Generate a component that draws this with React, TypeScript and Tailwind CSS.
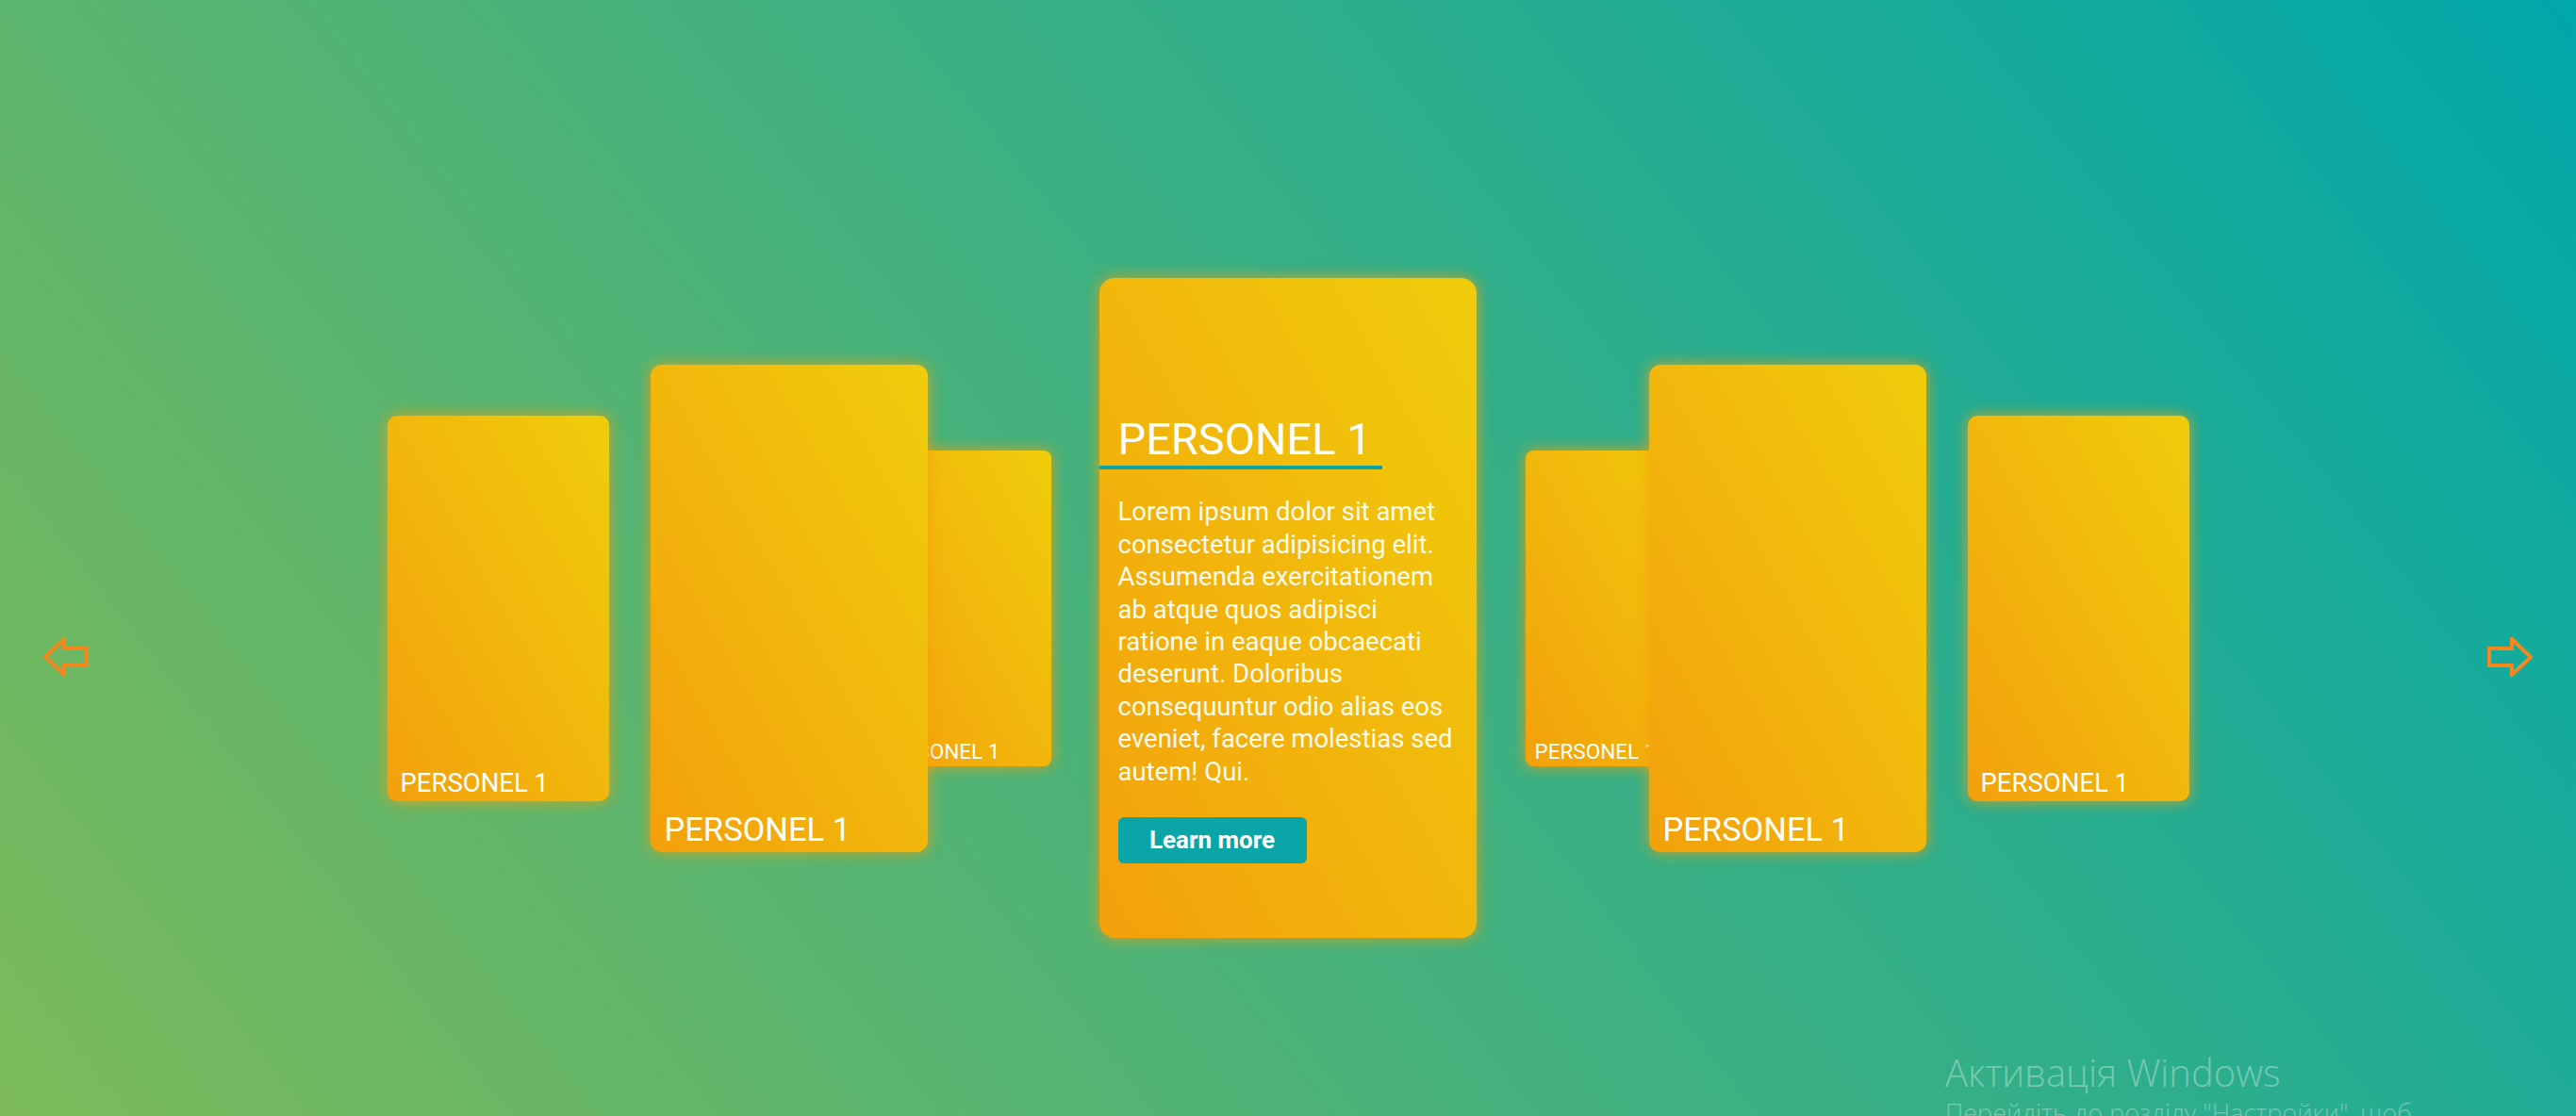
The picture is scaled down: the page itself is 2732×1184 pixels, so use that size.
import React from "react";

type Size = "sm" | "md" | "lg";

const sizes: Record<Size, { box: string; label: string }> = {
  sm: { box: "w-[193px] h-[335px] rounded-[8px]", label: "text-[22.5px] px-[10px] pb-[4px]" },
  md: { box: "w-[235px] h-[409px] rounded-[10px]", label: "text-[27.5px] px-[14px] pb-[5px]" },
  lg: { box: "w-[294px] h-[517px] rounded-[12px]", label: "text-[34.5px] px-[15px] pb-[6px]" },
};

const cardBg =
  "bg-linear-to-bl from-[#efcd0b] to-[#f3a00c] shadow-[0_0_16px_rgba(244,160,12,0.85)]";

function SideCard({ size, className = "" }: { size: Size; className?: string }) {
  const s = sizes[size];
  return (
    <div className={`flex shrink-0 flex-col justify-end ${cardBg} ${s.box} ${className}`}>
      <h3 className={`whitespace-nowrap font-normal leading-none text-white ${s.label}`}>PERSONEL 1</h3>
    </div>
  );
}

function Arrow({ dir }: { dir: "left" | "right" }) {
  const points =
    dir === "left"
      ? "2,21 22,2 22,12 46,12 46,30 22,30 22,40"
      : "46,21 26,2 26,12 2,12 2,30 26,30 26,40";
  return (
    <button className="mt-[104px] h-[42px] w-[48px] shrink-0 cursor-pointer" aria-label={dir}>
      <svg viewBox="0 0 48 42" className="h-full w-full">
        <polygon points={points} fill="none" stroke="#f5871d" strokeWidth="4" strokeLinejoin="miter" />
      </svg>
    </button>
  );
}

export default function App() {
  return (
    <div className="relative h-[1184px] w-full overflow-hidden bg-[linear-gradient(52deg,#7cba59,#00a7a9)] font-['Roboto',sans-serif]">
      <div className="flex h-full items-center px-[46px] pt-[106px]">
        <Arrow dir="left" />

        <div className="flex flex-1 items-center justify-center">
          <SideCard size="md" className="mr-[44px]" />
          <SideCard size="lg" className="relative z-10" />
          <SideCard size="sm" className="ml-[-62px]" />

          <div className={`ml-[51px] mr-[52px] flex h-[700px] w-[400px] shrink-0 flex-col rounded-[16px] pt-[143px] ${cardBg}`}>
            <h2 className="w-[300px] border-b-4 border-[#0ba4a2] pl-5 text-[47px] font-normal leading-[1.2] text-white">
              PERSONEL 1
            </h2>
            <p className="mt-[28px] px-5 text-[27.5px] leading-[34.4px] text-[#fffbea]">
              Lorem ipsum dolor sit amet consectetur adipisicing elit. Assumenda exercitationem ab atque quos
              adipisci ratione in eaque obcaecati deserunt. Doloribus consequuntur odio alias eos eveniet, facere
              molestias sed autem! Qui.
            </p>
            <button className="ml-5 mt-[31px] flex h-[49px] w-[200px] items-center justify-center rounded-[6px] bg-[#0aa5a6] text-[26px] font-bold text-white">
              Learn more
            </button>
          </div>

          <SideCard size="sm" />
          <SideCard size="lg" className="relative z-10 ml-[-62px]" />
          <SideCard size="md" className="ml-[44px]" />
        </div>

        <Arrow dir="right" />
      </div>

      {/* windows activation watermark */}
      <div className="pointer-events-none absolute left-[2063px] top-[1118px] whitespace-nowrap font-['Open_Sans',sans-serif] font-light text-white/35">
        <p className="text-[40px] leading-none">Активація Windows</p>
        <p className="mt-[9px] text-[27px] leading-none">Перейдіть до розділу "Настройки", щоб</p>
      </div>
    </div>
  );
}
